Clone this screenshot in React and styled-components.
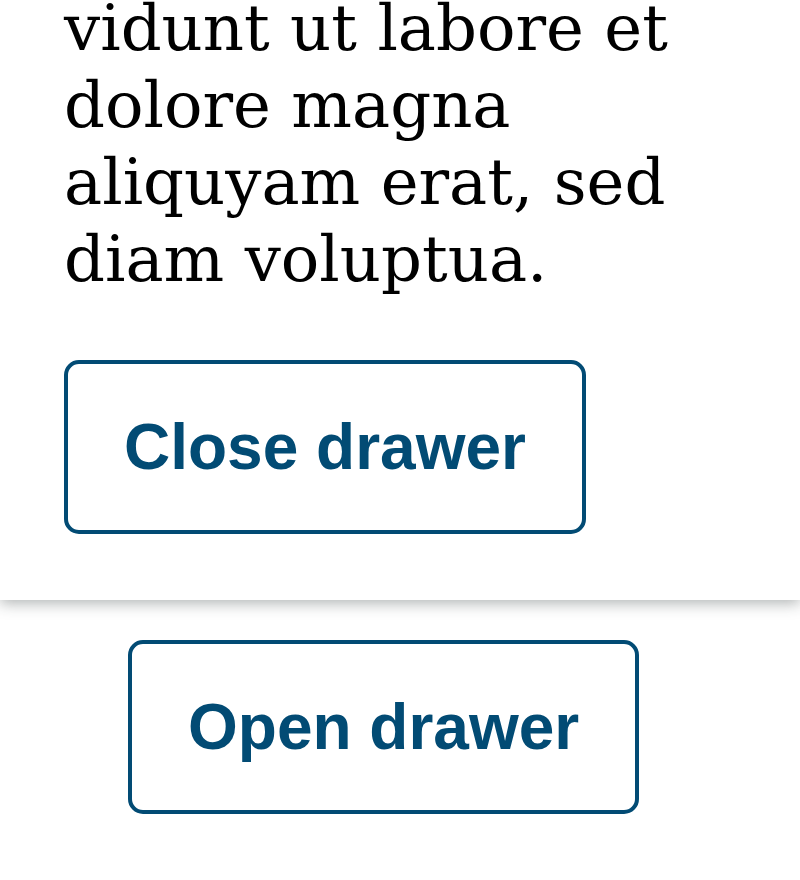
import React from "react";
import styled, { createGlobalStyle } from "styled-components";

const GlobalStyle = createGlobalStyle`
  html, body {
    margin: 0;
    padding: 0;
    background: #ffffff;
  }
  body {
    font-family: "DejaVu Serif", serif;
    overflow: hidden;
  }
`;

const Page = styled.div`
  width: 800px;
  height: 880px;
  position: relative;
  overflow: hidden;
`;

const Drawer = styled.aside`
  position: relative;
  z-index: 2;
  height: 600px;
  box-sizing: border-box;
  padding: 0 64px 66px;
  display: flex;
  flex-direction: column;
  justify-content: flex-end;
  overflow: hidden;
  background: #ffffff;
  box-shadow: 0 3px 14px rgba(40, 50, 50, 0.38);
`;

const Body = styled.p`
  margin: 0 0 62px;
  font-family: "DejaVu Serif", serif;
  font-size: 64px;
  line-height: 77px;
  color: #000000;
`;

const Button = styled.button`
  align-self: flex-start;
  margin: 0;
  padding: 46px 56px;
  border: 4px solid #024b74;
  border-radius: 15px;
  background: #ffffff;
  color: #024b74;
  font-family: "Liberation Sans", Arial, sans-serif;
  font-weight: 700;
  font-size: 64px;
  line-height: 74px;
  cursor: pointer;
`;

const Main = styled.main`
  display: flex;
  padding: 40px 0 0 128px;
`;

export default function App() {
  return (
    <Page>
      <GlobalStyle />
      <Drawer>
        <Body>
          Lorem ipsum dolor sit amet, consetetur sadipscing elitr, sed diam
          nonumy eirmod tempor in&shy;vidunt ut labore et dolore magna
          aliquyam erat, sed diam voluptua.
        </Body>
        <Button>Close drawer</Button>
      </Drawer>
      <Main>
        <Button>Open drawer</Button>
      </Main>
    </Page>
  );
}
